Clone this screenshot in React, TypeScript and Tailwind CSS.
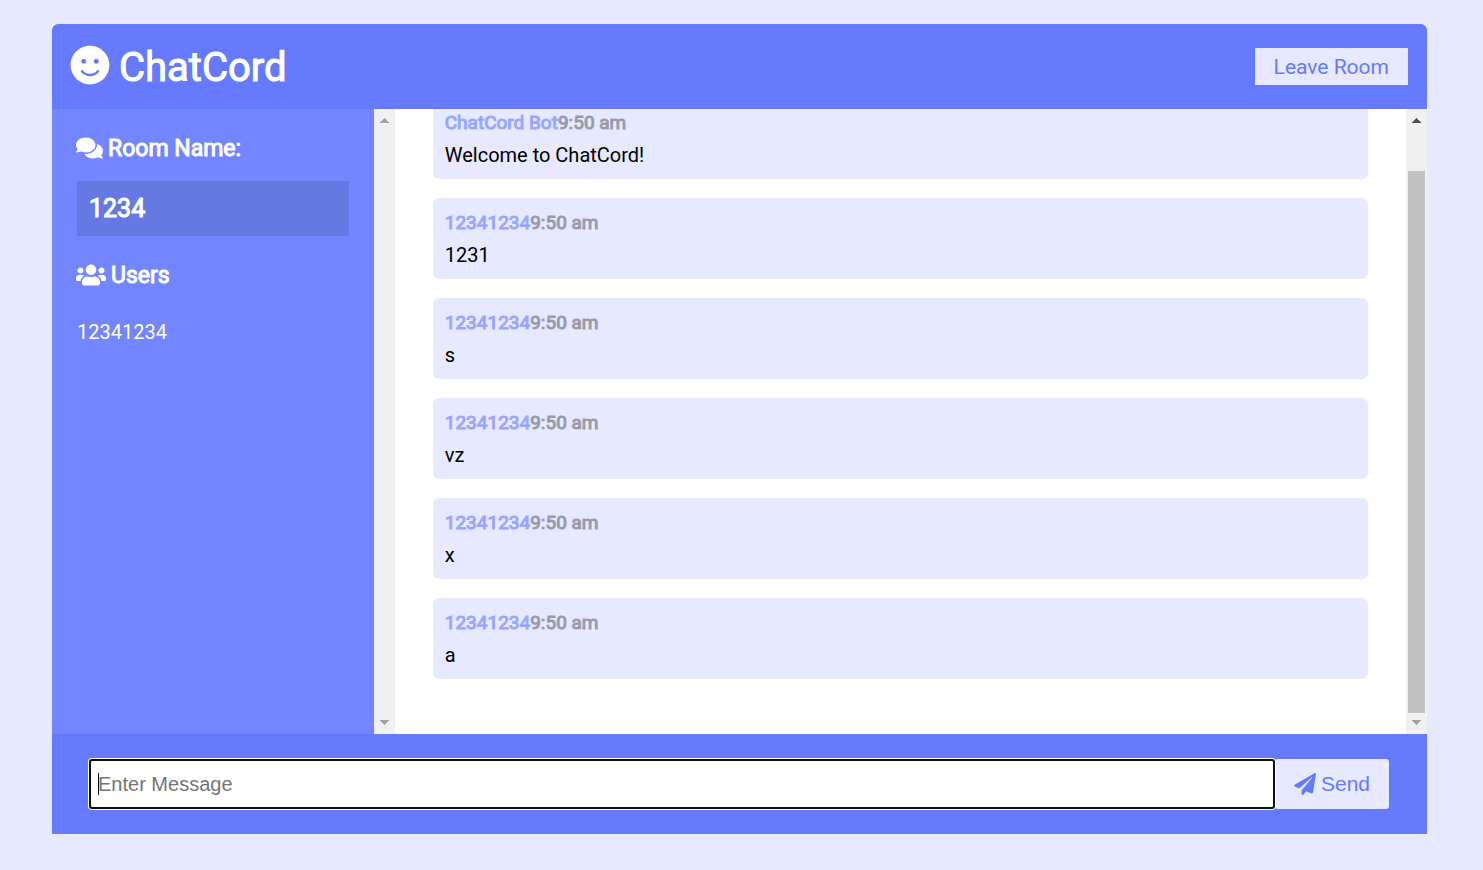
import { useState } from "react";
import { FaComments, FaPaperPlane, FaSmile, FaUsers } from "react-icons/fa";

type Message = { user: string; time: string; text: string };

const messages: Message[] = [
  { user: "ChatCord Bot", time: "9:50 am", text: "Welcome to ChatCord!" },
  { user: "12341234", time: "9:50 am", text: "1231" },
  { user: "12341234", time: "9:50 am", text: "s" },
  { user: "12341234", time: "9:50 am", text: "vz" },
  { user: "12341234", time: "9:50 am", text: "x" },
  { user: "12341234", time: "9:50 am", text: "a" },
];

const users = ["12341234"];

function Arrow({ down = false, dark = false }: { down?: boolean; dark?: boolean }) {
  return (
    <svg
      viewBox="0 0 9 5"
      className={dark ? "h-[5px] w-[9px] fill-[#505050]" : "h-[5px] w-[9px] fill-[#a3a3a3]"}
      shapeRendering="crispEdges"
      aria-hidden="true"
    >
      <path d={down ? "M0 0H9L4.5 5Z" : "M0 5H9L4.5 0Z"} />
    </svg>
  );
}

function ScrollTrack({ thumb = false }: { thumb?: boolean }) {
  return (
    <div className="flex w-[21px] shrink-0 flex-col items-center justify-between bg-[#f0f0f0] py-[9px]">
      <Arrow dark={thumb} />
      {thumb && <div className="mt-12 mb-[7px] w-[17px] flex-1 bg-[#c1c1c1]" />}
      <Arrow down />
    </div>
  );
}

function MessageCard({ user, time, text }: Message) {
  return (
    <article className="shrink-0 rounded-[6px] bg-[#e6e9ff] p-3">
      <p className="text-[19px] leading-[25px] text-[#99a6ff] [-webkit-text-stroke:1px]">
        {user}
        <span className="text-[#999ba8]">{time}</span>
      </p>
      <p className="mt-2 text-[20px] leading-6 text-black">{text}</p>
    </article>
  );
}

export default function App() {
  const [draft, setDraft] = useState("");

  return (
    <div className="flex h-screen bg-[#e6e9ff] pt-6 pr-14 pb-9 pl-[52px] font-[Roboto,sans-serif]">
      <div className="mx-auto flex w-full max-w-[1375px] flex-col bg-white text-white">
        <header className="flex h-[85px] shrink-0 items-center justify-between rounded-t-[6px] bg-[#667aff] pr-[19px] pl-[18px]">
          <h1 className="flex items-center gap-[9px] pt-[2px] text-[40px] leading-[48px] [-webkit-text-stroke:1px]">
            <FaSmile className="mb-[5px] size-10" />
            ChatCord
          </h1>
          <a
            href="#leave"
            className="bg-[#e6e9ff] px-[19px] pt-[7px] pb-[5px] text-[21px] leading-[25px] text-[#667aff]"
          >
            Leave Room
          </a>
        </header>

        <main className="flex min-h-0 flex-1">
          <div className="flex w-[calc(25%-1px)] shrink-0">
            <aside className="min-w-0 flex-1 bg-[#7386ff] px-[25px] pt-6">
              <h3 className="-ml-px flex items-center gap-[5px] text-[23px] leading-[31px] [-webkit-text-stroke:1px]">
                <FaComments className="mb-[2px] h-6 w-[27px]" />
                Room Name:
              </h3>
              <h2 className="mt-[17px] bg-[#6679e3] p-3 text-[25px] leading-[31px] [-webkit-text-stroke:1px]">
                1234
              </h2>
              <h3 className="mt-6 -ml-px flex items-center gap-[5px] text-[23px] leading-[31px] [-webkit-text-stroke:1px]">
                <FaUsers className="mb-[2px] h-6 w-[30px]" />
                Users
              </h3>
              <ul className="mt-[29px] text-[20px] leading-6">
                {users.map((name) => (
                  <li key={name}>{name}</li>
                ))}
              </ul>
            </aside>
            <ScrollTrack />
          </div>

          <section
            aria-label="Messages"
            className="flex min-w-0 flex-1 flex-col justify-end gap-[19px] overflow-hidden px-[38px] pb-[55px]"
          >
            {messages.map((message, index) => (
              <MessageCard key={index} {...message} />
            ))}
          </section>
          <ScrollTrack thumb />
        </main>

        <footer className="h-[100px] shrink-0 bg-[#667aff] py-[25px] pr-[38px] pl-[37px]">
          <form className="flex h-[50px]" onSubmit={(event) => event.preventDefault()}>
            <div className="relative flex min-w-0 flex-1">
              <input
                type="text"
                aria-label="Message"
                placeholder="Enter Message"
                autoComplete="off"
                value={draft}
                onChange={(event) => setDraft(event.target.value)}
                className="peer min-w-0 flex-1 rounded-[3px] border-2 border-[#101010] bg-white px-[7px] font-['Liberation_Sans',sans-serif] text-[20px] text-black ring-1 ring-white outline-none placeholder:text-[#757575]"
              />
              {/* Resting caret, replaced by the browser's own once the field has focus */}
              <span
                aria-hidden="true"
                className="pointer-events-none absolute inset-y-[14px] left-[9px] w-px bg-black peer-focus:hidden"
              />
            </div>
            <button
              type="submit"
              className="flex items-center gap-[5px] rounded-[3px] bg-[#e6e9ff] px-[19px] font-['Liberation_Sans',sans-serif] text-[21px] text-[#667aff]"
            >
              <FaPaperPlane className="size-[22px]" />
              Send
            </button>
          </form>
        </footer>
      </div>
    </div>
  );
}
